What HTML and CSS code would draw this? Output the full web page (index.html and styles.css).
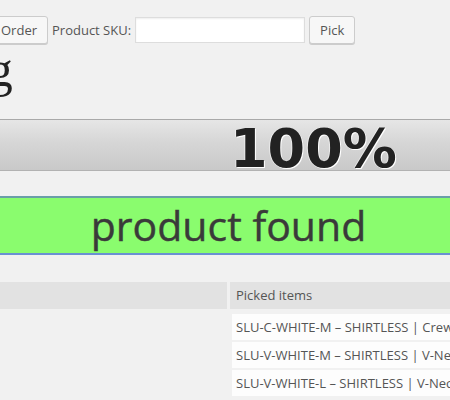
FILE: index.html
```html
<!DOCTYPE html>
<html lang="en">
<head>
<meta charset="utf-8">
<title>Picking</title>
<link rel="stylesheet" href="styles.css">
</head>
<body>
<div class="page">
  <div class="toolbar">
    <button class="btn btn-order" type="button">Order</button>
    <label class="sku-label" for="sku">Product SKU:</label>
    <input class="sku-input" id="sku" type="text">
    <button class="btn" type="button">Pick</button>
  </div>
  <h1 class="title">Picking</h1>
  <div class="progress"><span class="pct">100%</span></div>
  <div class="status">product found</div>
  <div class="items">
    <div class="col col-left">
      <div class="th"></div>
    </div>
    <div class="col col-right">
      <div class="th">Picked items</div>
      <ul class="picked">
        <li class="row">SLU-C-WHITE-M – SHIRTLESS | Crew Neck Undershirt</li>
        <li class="row">SLU-V-WHITE-M – SHIRTLESS | V-Neck Undershirt</li>
        <li class="row">SLU-V-WHITE-L – SHIRTLESS | V-Neck Undershirt</li>
      </ul>
    </div>
  </div>
</div>
</body>
</html>
```
FILE: styles.css
```css
html, body {
  margin: 0;
  padding: 0;
  background: #f1f1f1;
  overflow: hidden;
}
.page {
  width: 450px;
  height: 400px;
  overflow: hidden;
  font-family: "Open Sans", "Liberation Sans", sans-serif;
  font-size: 13px;
  color: #555;
}
.toolbar {
  display: flex;
  align-items: center;
  gap: 4px;
  margin: 16px 0 0 -10px;
  height: 28px;
}
.btn {
  height: 28px;
  box-sizing: border-box;
  padding: 0 10px 1px;
  border: 1px solid #ccc;
  border-radius: 3px;
  background: #f7f7f7;
  box-shadow: 0 1px 0 #ccc;
  color: #555;
  font-family: "Open Sans", "Liberation Sans", sans-serif;
  font-size: 13px;
  line-height: 26px;
  flex: none;
}
.sku-label {
  flex: none;
  white-space: nowrap;
}
.sku-input {
  width: 170px;
  height: 26px;
  box-sizing: border-box;
  border: 1px solid #ddd;
  background: #fff;
  box-shadow: inset 0 1px 2px rgba(0,0,0,0.07);
  margin: 0;
  padding: 3px 5px;
  flex: none;
}
.title {
  margin: 0 0 25px -140px;
  font-family: "Liberation Serif", "Times New Roman", serif;
  font-weight: normal;
  font-size: 50px;
  line-height: 50px;
  height: 50px;
  color: #222;
  white-space: nowrap;
}
.progress {
  height: 50px;
  border-top: 1px solid #a9a9a9;
  border-bottom: 1px solid #b2b2b2;
  background: linear-gradient(to bottom, #e6e6e6 0%, #d6d6d6 45%, #c9c9c9 100%);
  margin: 0 -10px;
  padding-left: 240px;
  overflow: hidden;
}
.pct {
  display: block;
  font-family: "DejaVu Sans", Verdana, sans-serif;
  font-weight: bold;
  font-size: 54px;
  line-height: 57px;
  color: #222;
  text-shadow: 1px 1px 0 #fff, -1px 0 0 rgba(255,255,255,0.5);
  white-space: nowrap;
}
.status {
  margin: 25px -10px 0;
  height: 55px;
  border-top: 2px solid #6a9ea8;
  border-bottom: 2px solid #6a90d2;
  background: #8afc6e;
  text-align: center;
  padding-left: 7px;
  font-family: "Open Sans", "Liberation Sans", sans-serif;
  font-size: 41px;
  line-height: 55px;
  color: #3a3a3a;
  -webkit-text-stroke: 0.4px #3a3a3a;
}
.items {
  display: grid;
  grid-template-columns: 237px 1fr;
  column-gap: 3px;
  margin: 27px 0 0 -10px;
  width: 700px;
}
.th {
  height: 27px;
  line-height: 27px;
  background: #e2e2e2;
  padding-left: 6px;
  white-space: nowrap;
}
.picked {
  list-style: none;
  margin: 5px 0 0 2px;
  padding: 0;
}
.row {
  height: 26px;
  line-height: 26px;
  margin-bottom: 2px;
  padding-left: 4px;
  background: #fdfdfd;
  white-space: nowrap;
}
```
